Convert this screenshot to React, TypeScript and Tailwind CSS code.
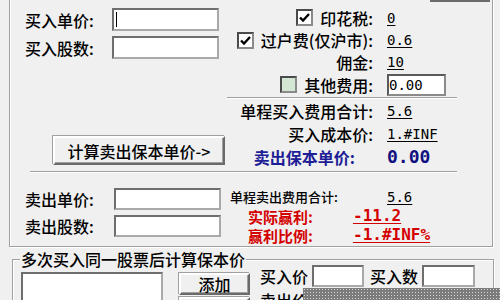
import type { ReactNode } from "react";

const sunken =
  "border-2 border-t-[#6e6e6e] border-l-[#6e6e6e] border-b-[#a9a9a9] border-r-[#a9a9a9] bg-white";
const etched = "border border-[#a0a0a0] shadow-[1px_1px_0_#fff,inset_1px_1px_0_#fff]";
const raised =
  "flex items-center justify-center border-2 border-t-white border-l-white border-b-[#6a6a6a] border-r-[#6a6a6a] bg-[#f0f0f0] shadow-[inset_-1px_-1px_0_#a0a0a0,-1px_-1px_0_#a0a0a0]";
const mono = "font-['DejaVu_Sans_Mono',monospace]";

function Check({ checked }: { checked?: boolean }) {
  return (
    <span
      className={`flex h-[17px] w-[17px] items-center justify-center border-2 border-t-[#4a4a4a] border-l-[#4a4a4a] border-b-[#8a8a8a] border-r-[#8a8a8a] ${
        checked ? "bg-white" : "bg-[#d3e5d3]"
      }`}
    >
      {checked ? (
        <svg width="13" height="13" viewBox="0 0 13 13">
          <path d="M2 6.5 L5 9.5 L11 3" fill="none" stroke="#000" strokeWidth="2.4" />
        </svg>
      ) : null}
    </span>
  );
}

function Value({ children }: { children: ReactNode }) {
  return <span className={`${mono} ml-[14px] text-[14px] leading-none underline underline-offset-2`}>{children}</span>;
}

function FeeRow({ h, label, check, children }: { h: string; label: string; check?: boolean | null; children: ReactNode }) {
  return (
    <div className={`flex items-center ${h}`}>
      <div className="flex w-[148px] items-center justify-end gap-[7px]">
        {check === undefined || check === null ? null : <Check checked={check} />}
        <span className="text-[16px] leading-none">{label}</span>
      </div>
      {children}
    </div>
  );
}

function Field({ label, labelW }: { label: string; labelW: string }) {
  return (
    <div className="flex items-center">
      <span className={`${labelW} pl-[15px] text-[16px] leading-none`}>{label}</span>
      <div className={`${sunken} h-[22px] w-[107px]`} />
    </div>
  );
}

export default function App() {
  return (
    <div className="relative h-[300px] w-[500px] overflow-hidden bg-[#f0f0f0] font-['Noto_Sans_CJK_SC',sans-serif] font-medium text-black">
      {/* 主计算框 */}
      <div className={`-mt-[2px] ml-[9px] h-[249px] w-[484px] ${etched}`}>
        <div className="flex h-[3px]">
          <div className="ml-[420px] mt-px h-[2px] w-[60px] bg-[#6a6a6a]" />
        </div>

        <div className="flex">
          <div className="flex w-[215px] flex-col">
            <div className="mt-[6px] flex h-[23px] items-center">
              <span className="w-[102px] pl-[15px] text-[16px] leading-none">买入单价:</span>
              <div className={`${sunken} flex h-[23px] w-[107px] items-center pl-[2px]`}>
                <span className="h-[15px] w-px bg-black" />
              </div>
            </div>
            <div className="mt-[5px] flex h-[23px] items-center">
              <span className="w-[102px] pl-[15px] text-[16px] leading-none">买入股数:</span>
              <div className={`${sunken} h-[23px] w-[107px]`} />
            </div>
            <button className={`${raised} ml-[43px] mt-[77px] h-[29px] w-[172px] text-[16px] leading-none`}>
              计算卖出保本单价-&gt;
            </button>
          </div>

          <div className="flex w-[235px] flex-col">
            <div className="mt-[4px]" />
            <FeeRow h="h-[23px]" label="印花税:" check>
              <Value>0</Value>
            </FeeRow>
            <FeeRow h="h-[22px]" label="过户费(仅沪市):" check>
              <Value>0.6</Value>
            </FeeRow>
            <FeeRow h="h-[22px]" label="佣金:">
              <Value>10</Value>
            </FeeRow>
            <FeeRow h="h-[23px]" label="其他费用:" check={false}>
              <div className={`${mono} ml-[14px] flex h-[22px] w-[59px] items-center border-2 border-t-[#5a5a5a] border-l-[#5a5a5a] border-b-[#8a8a8a] border-r-[#8a8a8a] bg-white text-[14px] leading-none`}>
                0.00
              </div>
            </FeeRow>
            <div className="ml-[2px] mt-px h-[2px] w-[230px] border-t border-b border-t-[#a0a0a0] border-b-white" />
            <div className="mt-px" />
            <FeeRow h="h-[22px]" label="单程买入费用合计:">
              <Value>5.6</Value>
            </FeeRow>
            <FeeRow h="h-[23px]" label="买入成本价:">
              <Value>1.#INF</Value>
            </FeeRow>
            <div className="flex h-[24px] items-center">
              <span className="w-[148px] pr-[18px] text-right text-[16px] font-bold leading-none text-[#1e1e96]">卖出保本单价:</span>
              <span className={`${mono} ml-[14px] text-[18px] font-bold leading-none text-[#101080]`}>0.00</span>
            </div>
          </div>
        </div>

        <div className="ml-[20px] mt-[2px] h-[2px] w-[427px] border-t border-b border-t-[#a0a0a0] border-b-white" />

        <div className="flex">
          <div className="flex w-[219px] flex-col gap-[5px] pt-[15px]">
            <Field label="卖出单价:" labelW="w-[104px]" />
            <Field label="卖出股数:" labelW="w-[104px]" />
          </div>
          <div className="flex flex-col pt-[13px]">
            <div className="flex h-[21px] items-center">
              <span className="w-[158px] pl-px text-[13px] leading-none">单程卖出费用合计:</span>
              <span className={`${mono} text-[14px] leading-none underline underline-offset-2`}>5.6</span>
            </div>
            <div className="flex h-[18px] items-center text-[#d40000]">
              <span className="w-[124px] pl-[19px] text-[15px] font-bold leading-none">实际赢利:</span>
              <span className={`${mono} text-[16px] font-bold leading-none underline underline-offset-2`}>-11.2</span>
            </div>
            <div className="flex h-[20px] items-center text-[#d40000]">
              <span className="w-[124px] pl-[19px] text-[15px] font-bold leading-none">赢利比例:</span>
              <span className={`${mono} text-[16px] font-bold leading-none underline underline-offset-2`}>-1.#INF%</span>
            </div>
          </div>
        </div>
      </div>

      {/* 多次买入 */}
      <div className={`ml-[12px] mt-[12px] h-[60px] w-[482px] ${etched}`}>
        <div className="-mt-[11px] ml-[7px] w-fit bg-[#f0f0f0] px-px text-[16px] leading-[20px]">多次买入同一股票后计算保本价</div>
        <div className="flex items-start">
          <div className={`${sunken} ml-[8px] mt-[3px] h-[40px] w-[142px]`} />
          <div className="ml-[16px] mt-[4px] flex flex-col gap-[2px]">
            <button className={`${raised} h-[22px] w-[71px] text-[16px] leading-none`}>添加</button>
            <button className={`${raised} h-[22px] w-[71px] text-[16px] leading-none`}>删除</button>
          </div>
          <div className="-mt-[4px] ml-[10px] flex flex-col gap-[2px]">
            <div className="flex h-[22px] items-center">
              <span className="w-[52px] text-[16px] leading-none">买入价</span>
              <div className={`${sunken} h-[22px] w-[52px]`} />
              <span className="ml-[6px] w-[52px] text-[16px] leading-none">买入数</span>
              <div className={`${sunken} h-[22px] w-[53px]`} />
            </div>
            <div className="flex h-[22px] items-center">
              <span className="w-[52px] text-[16px] leading-none">卖出价</span>
              <div className={`${sunken} h-[22px] w-[52px]`} />
            </div>
          </div>
        </div>
      </div>

      <div className="absolute left-[303px] top-[288px] h-[12px] w-[197px] bg-[#7c7c7c] bg-[radial-gradient(circle,#d6d6d6_0.8px,transparent_1px)] bg-[length:3px_3px]" />
    </div>
  );
}
